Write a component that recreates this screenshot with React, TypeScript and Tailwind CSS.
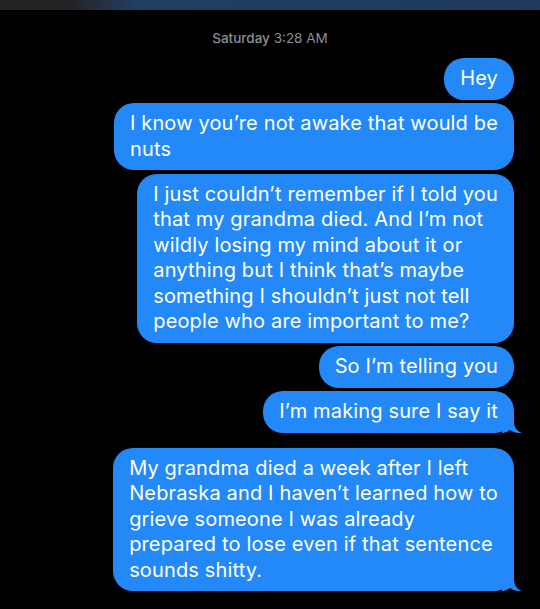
import React from "react";

const font = { fontFamily: 'Inter, "Liberation Sans", Arial, sans-serif' };

function Tail() {
  return (
    <svg
      className="absolute -right-[8px] bottom-0"
      width="20"
      height="20"
      viewBox="0 0 20 20"
    >
      <path
        d="M0 0 H12 V9 C12 14 15 18 20 20 C14.5 20.3 10.5 19 8 17 C5.5 19 2.5 20 0 20 Z"
        fill="#2389f8"
      />
    </svg>
  );
}

function Bubble({ lines, tail }: { lines: string[]; tail?: boolean }) {
  return (
    <div className="relative self-end">
      <div className="rounded-[20px] bg-[#2389f8] px-4 py-[8px] text-[20px] leading-[25.5px] tracking-[0.15px] text-white">
        {lines.map((l, i) => (
          <div key={i} className="whitespace-nowrap">
            {l}
          </div>
        ))}
      </div>
      {tail && <Tail />}
    </div>
  );
}

export default function App() {
  return (
    <div className="min-h-screen w-[540px] bg-black" style={font}>
      <div className="h-[10px] bg-gradient-to-r from-[#232325] from-[13%] via-[#213f60] via-[25%] to-[#1f3a58]" />

      <div className="pt-[20px] text-center text-[13.5px] leading-[16px] text-[#8e8e93]">
        <span className="font-medium">Saturday</span> 3:28 AM
      </div>

      <div className="flex flex-col gap-[3.5px] pr-[26px] pt-[12px]">
        <Bubble lines={["Hey"]} />
        <Bubble lines={["I know you’re not awake that would be", "nuts"]} />
        <Bubble
          lines={[
            "I just couldn’t remember if I told you",
            "that my grandma died. And I’m not",
            "wildly losing my mind about it or",
            "anything but I think that’s maybe",
            "something I shouldn’t just not tell",
            "people who are important to me?",
          ]}
        />
        <Bubble lines={["So I’m telling you"]} />
        <Bubble lines={["I’m making sure I say it"]} tail />
        <div className="h-[8px]" />
        <Bubble
          lines={[
            "My grandma died a week after I left",
            "Nebraska and I haven’t learned how to",
            "grieve someone I was already",
            "prepared to lose even if that sentence",
            "sounds shitty.",
          ]}
          tail
        />
      </div>
    </div>
  );
}
